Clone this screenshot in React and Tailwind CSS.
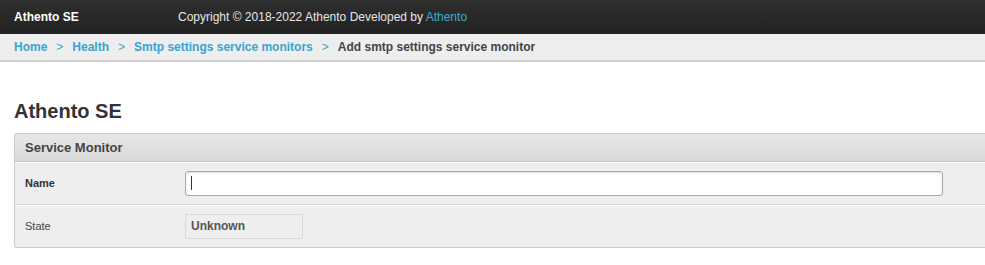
export default function App() {
  const font = { fontFamily: '"Liberation Sans", Arial, sans-serif' };
  return (
    <div className="w-[985px] h-[265px] bg-white overflow-hidden" style={font}>
      <div className="h-[34px] flex items-center bg-gradient-to-b from-[#2f2f2f] to-[#222] text-[12px]">
        <div className="w-[178px] pl-[14px] font-bold text-white">Athento SE</div>
        <div className="text-[#e6e6e6]">
          Copyright © 2018-2022 Athento Developed by <span className="text-[#3fa9d6]">Athento</span>
        </div>
      </div>
      <div className="h-[28px] flex items-center bg-[#eeeeee] border-b-2 border-[#d0d0d0] pl-[14px] text-[12px] font-bold">
        <span className="text-[#3aa3cf]">Home</span>
        <span className="text-[#3aa3cf] mx-[9px] font-normal">&gt;</span>
        <span className="text-[#3aa3cf]">Health</span>
        <span className="text-[#3aa3cf] mx-[9px] font-normal">&gt;</span>
        <span className="text-[#3aa3cf]">Smtp settings service monitors</span>
        <span className="text-[#3aa3cf] mx-[9px] font-normal">&gt;</span>
        <span className="text-[#444]">Add smtp settings service monitor</span>
      </div>
      <div className="pl-[14px] pt-[37px]">
        <h1 className="text-[20px] leading-[24px] font-bold text-[#333] mb-[10px]">Athento SE</h1>
        <div className="border border-r-0 border-[#cccccc] rounded-l-[3px] bg-[#eeeeee]">
          <div className="h-[28px] flex items-center pl-[10px] bg-gradient-to-b from-[#e6e6e6] to-[#dadada] border-b border-[#c8c8c8] text-[13px] font-bold text-[#444]">
            Service Monitor
          </div>
          <div className="h-[43px] flex items-center border-b border-[#d6d6d6] shadow-[inset_0_1px_0_#fff]">
            <div className="w-[170px] pl-[10px] text-[11px] font-bold text-[#333]">Name</div>
            <div className="w-[758px] h-[25px] bg-white border border-[#aaaaaa] rounded-[3px] shadow-[inset_0_1px_2px_rgba(0,0,0,0.15)] flex items-center pl-[5px]">
              <div className="w-px h-[14px] bg-[#333]"></div>
            </div>
          </div>
          <div className="h-[42px] flex items-center shadow-[inset_0_1px_0_#fff]">
            <div className="w-[170px] pl-[10px] text-[11px] text-[#444]">State</div>
            <div className="w-[118px] h-[25px] border border-dotted border-[#c4c4c4] rounded-[2px] flex items-center pl-[5px] text-[12px] font-bold text-[#555]">
              Unknown
            </div>
          </div>
        </div>
      </div>
    </div>
  );
}
